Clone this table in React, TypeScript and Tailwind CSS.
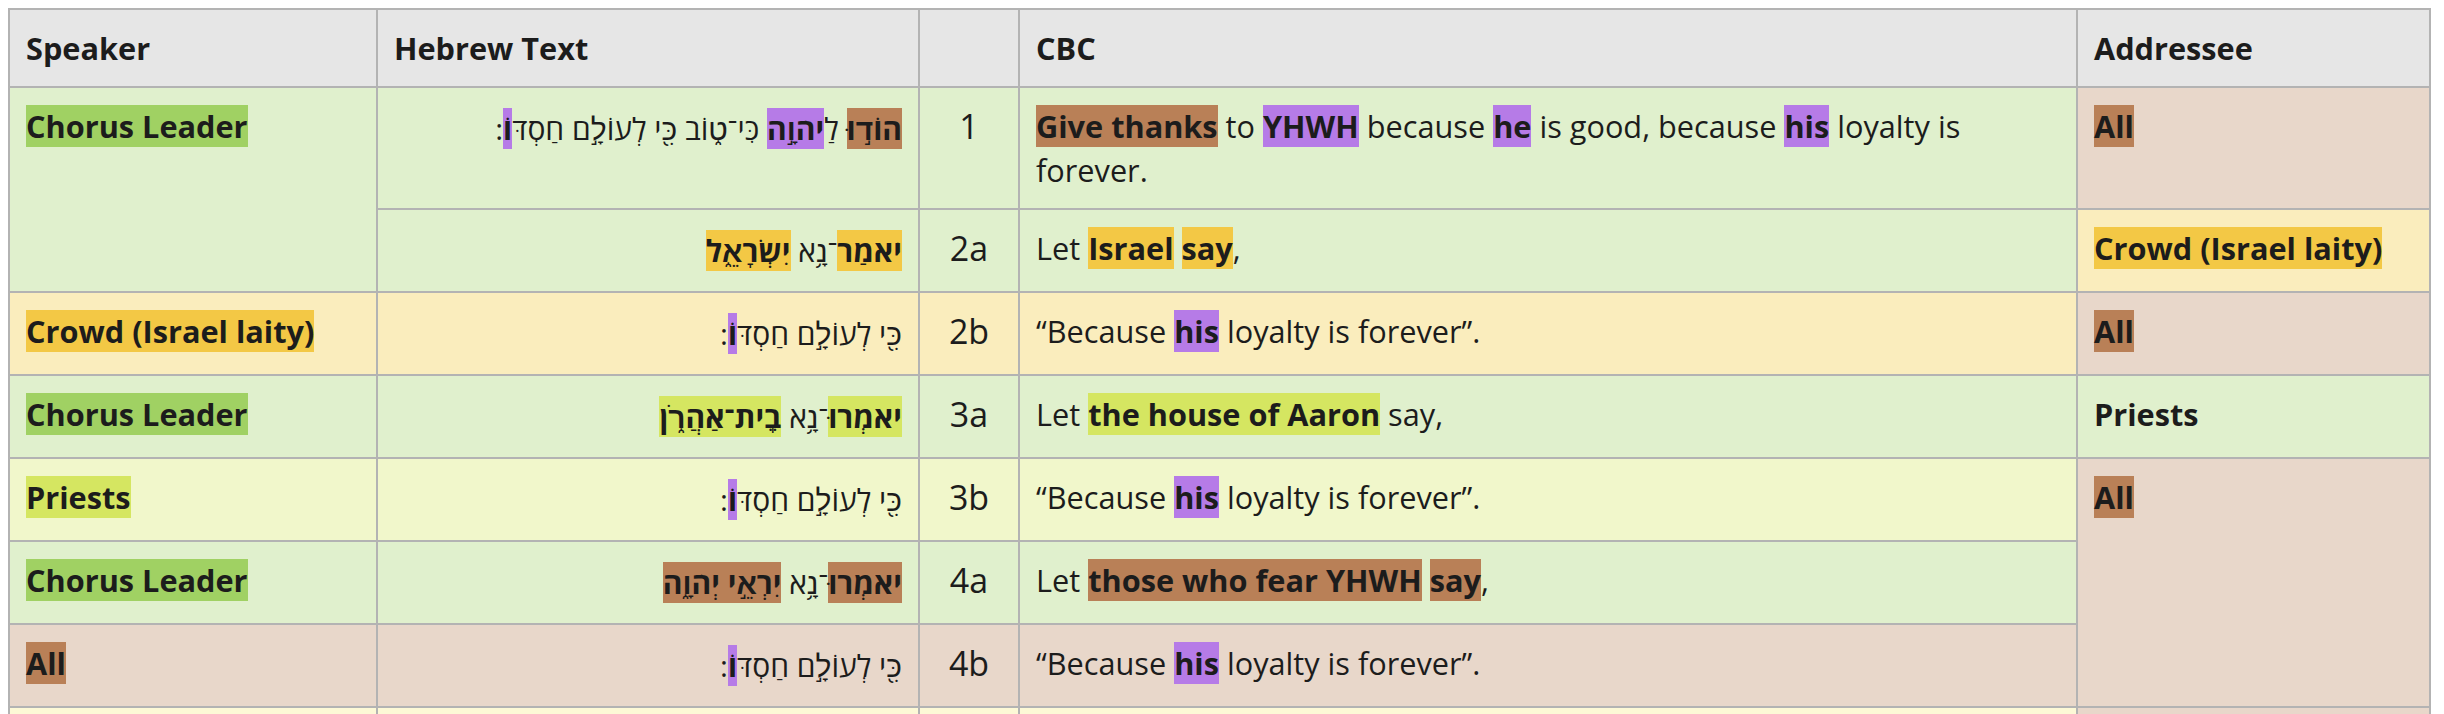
import type { ReactNode } from 'react';

type Tone = 'green' | 'yellow' | 'lime' | 'brown' | 'purple';

const mark: Record<Tone, string> = {
  green: 'bg-[#a0d163]',
  yellow: 'bg-[#f3c845]',
  lime: 'bg-[#d5e661]',
  brown: 'bg-[#b98057]',
  purple: 'bg-[#b67be7]',
};

const fill: Record<Tone, string> = {
  green: 'bg-[#e0f0cd]',
  yellow: 'bg-[#faedbd]',
  lime: 'bg-[#f1f7cb]',
  brown: 'bg-[#e8d7ca]',
  purple: 'bg-[#eadcf7]',
};

const Hl = ({ tone, children }: { tone: Tone; children: ReactNode }) => (
  <span className={`${mark[tone]} font-bold`}>{children}</span>
);

const cell = 'border-2 border-[#b3b3b3] align-top px-4 py-4';
const heb = 'text-right font-["Open_Sans","Liberation_Sans","DejaVu_Sans",sans-serif] text-[30px] leading-[49px]';

type Side = { tone: Tone; label: string; plain?: boolean; span?: number } | null;

type Row = {
  speaker: Side;
  hebrew: ReactNode;
  num: string;
  cbc: ReactNode;
  addressee: Side;
  tone: Tone;
};

const ledBy = (
  <>
    כִּ֖י לְעוֹלָ֣ם חַסְדּ<Hl tone="purple">וֹ</Hl>:
  </>
);

const refrain = (
  <>
    “Because <Hl tone="purple">his</Hl> loyalty is forever”.
  </>
);

const rows: Row[] = [
  {
    tone: 'green',
    speaker: { tone: 'green', label: 'Chorus Leader', span: 2 },
    hebrew: (
      <>
        <Hl tone="brown">הוֹד֣וּ</Hl> לַ<Hl tone="purple">יהֹוָ֣ה</Hl> כִּי־ט֑וֹב {ledBy}
      </>
    ),
    num: '1',
    cbc: (
      <>
        <Hl tone="brown">Give thanks</Hl> to <Hl tone="purple">YHWH</Hl> because <Hl tone="purple">he</Hl> is good,
        because <Hl tone="purple">his</Hl> loyalty is forever.
      </>
    ),
    addressee: { tone: 'brown', label: 'All' },
  },
  {
    tone: 'green',
    speaker: null,
    hebrew: (
      <>
        <Hl tone="yellow">יֹאמַר</Hl>־נָ֥א <Hl tone="yellow">יִשְׂרָאֵ֑ל</Hl>
      </>
    ),
    num: '2a',
    cbc: (
      <>
        Let <Hl tone="yellow">Israel</Hl> <Hl tone="yellow">say</Hl>,
      </>
    ),
    addressee: { tone: 'yellow', label: 'Crowd (Israel laity)' },
  },
  {
    tone: 'yellow',
    speaker: { tone: 'yellow', label: 'Crowd (Israel laity)' },
    hebrew: ledBy,
    num: '2b',
    cbc: refrain,
    addressee: { tone: 'brown', label: 'All' },
  },
  {
    tone: 'green',
    speaker: { tone: 'green', label: 'Chorus Leader' },
    hebrew: (
      <>
        <Hl tone="lime">יֹאמְרוּ</Hl>־נָ֥א <Hl tone="lime">בֵֽית־אַהֲרֹ֑ן</Hl>
      </>
    ),
    num: '3a',
    cbc: (
      <>
        Let <Hl tone="lime">the house of Aaron</Hl> say,
      </>
    ),
    addressee: { tone: 'green', label: 'Priests', plain: true },
  },
  {
    tone: 'lime',
    speaker: { tone: 'lime', label: 'Priests' },
    hebrew: ledBy,
    num: '3b',
    cbc: refrain,
    addressee: { tone: 'brown', label: 'All', span: 3 },
  },
  {
    tone: 'green',
    speaker: { tone: 'green', label: 'Chorus Leader' },
    hebrew: (
      <>
        <Hl tone="brown">יֹאמְרוּ</Hl>־נָ֥א <Hl tone="brown">יִרְאֵ֣י</Hl><Hl tone="brown"> יְהֹוָ֑ה</Hl>
      </>
    ),
    num: '4a',
    cbc: (
      <>
        Let <Hl tone="brown">those who fear YHWH</Hl> <Hl tone="brown">say</Hl>,
      </>
    ),
    addressee: null,
  },
  {
    tone: 'brown',
    speaker: { tone: 'brown', label: 'All' },
    hebrew: ledBy,
    num: '4b',
    cbc: refrain,
    addressee: null,
  },
];

const SideCell = ({ side }: { side: Side }) => {
  if (!side) return null;
  return (
    <td rowSpan={side.span} className={`${cell} ${fill[side.tone]}`}>
      {side.plain ? <span className="font-bold">{side.label}</span> : <Hl tone={side.tone}>{side.label}</Hl>}
    </td>
  );
};

export default function App() {
  return (
    <div className="bg-white min-h-screen pt-2 pl-2 font-['Open_Sans',sans-serif] text-[30.7px] leading-[44px] text-[#1c1c1c]">
      <table className="table-fixed border-collapse w-[2421px]">
        <colgroup>
          <col className="w-[368px]" />
          <col className="w-[542px]" />
          <col className="w-[100px]" />
          <col className="w-[1058px]" />
          <col className="w-[353px]" />
        </colgroup>
        <thead>
          <tr className="bg-[#e6e6e6] text-left font-bold">
            <th className={cell}>Speaker</th>
            <th className={cell}>Hebrew Text</th>
            <th className={cell}></th>
            <th className={cell}>CBC</th>
            <th className={cell}>Addressee</th>
          </tr>
        </thead>
        <tbody>
          {rows.map((row) => (
            <tr key={row.num}>
              <SideCell side={row.speaker} />
              <td dir="rtl" className={`${cell} ${fill[row.tone]} ${heb}`}>
                {row.hebrew}
              </td>
              <td className={`${cell} ${fill[row.tone]} text-center text-[34px]`}>{row.num}</td>
              <td className={`${cell} ${fill[row.tone]}`}>{row.cbc}</td>
              <SideCell side={row.addressee} />
            </tr>
          ))}
          <tr className="h-10">
            <td className={`${cell} bg-[#fdf9d6]`}></td>
            <td className={`${cell} bg-[#fdf9d6]`}></td>
            <td className={`${cell} bg-[#fdf9d6]`}></td>
            <td className={`${cell} bg-[#fdf9d6]`}></td>
            <td className={`${cell} bg-[#e8d7ca]`}></td>
          </tr>
        </tbody>
      </table>
    </div>
  );
}
